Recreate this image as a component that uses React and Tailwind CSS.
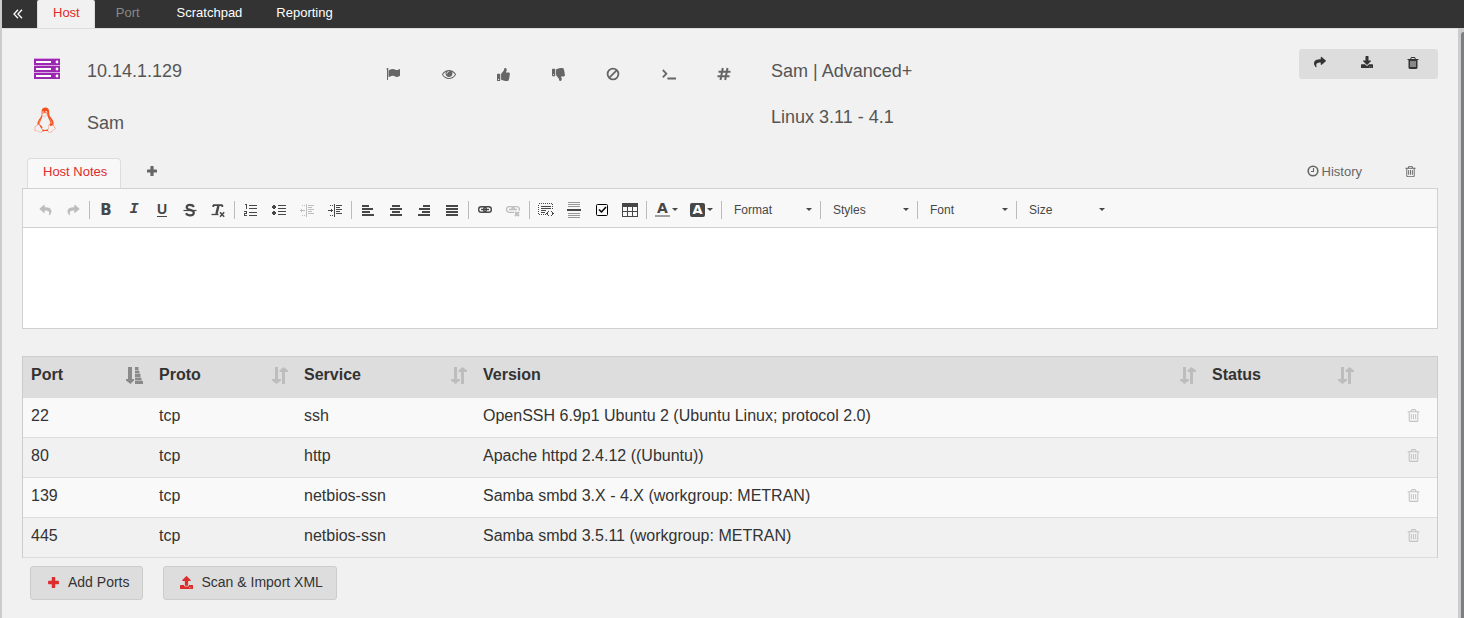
import React from "react";
import { FaThumbsUp, FaThumbsDown, FaShare, FaDownload, FaUpload, FaLinux, FaReply } from "react-icons/fa";

const CAN =
  "m928 32v64q0 14-9 23t-23 9h-96v948q0 83-47 143.5t-113 60.5h-832q-66 0-113-58.5t-47-141.5v-952h-96q-14 0-23-9t-9-23v-64q0-14 9-23t23-9h309l70-167q15-37 54-63t79-26h320q40 0 79 26t54 63l70 167h309q14 0 23 9t9 23z";
const GLYPHS = {
  trashOutline:
    "M704 736v576q0 14-9 23t-23 9h-64q-14 0-23-9t-9-23v-576q0-14 9-23t23-9h64q14 0 23 9t9 23zm256 0v576q0 14-9 23t-23 9h-64q-14 0-23-9t-9-23v-576q0-14 9-23t23-9h64q14 0 23 9t9 23zm256 0v576q0 14-9 23t-23 9h-64q-14 0-23-9t-9-23v-576q0-14 9-23t23-9h64q14 0 23 9t9 23zm128 724v-948h-896v948q0 22 7 40.5t14.5 27 10.5 8.5h832q3 0 10.5-8.5t14.5-27 7-40.5zm-672-1076h448l-48-117q-7-9-17-11h-317q-10 2-17 11z" + CAN,
  trash:
    "M704 1376v-704q0-14-9-23t-23-9h-64q-14 0-23 9t-9 23v704q0 14 9 23t23 9h64q14 0 23-9t9-23zm256 0v-704q0-14-9-23t-23-9h-64q-14 0-23 9t-9 23v704q0 14 9 23t23 9h64q14 0 23-9t9-23zm256 0v-704q0-14-9-23t-23-9h-64q-14 0-23 9t-9 23v704q0 14 9 23t23 9h64q14 0 23-9t9-23zm-544-992h448l-48-117q-7-9-17-11h-317q-10 2-17 11z" + CAN,
  flag:
    "M320 256q0 72-64 110v1266q0 13-9.5 22.5t-22.5 9.5h-64q-13 0-22.5-9.5t-9.5-22.5v-1266q-64-38-64-110 0-53 37.5-90.5t90.5-37.5 90.5 37.5 37.5 90.5zm1472 64v763q0 25-12.5 38.5t-39.5 27.5q-215 116-369 116-61 0-123.5-22t-108.5-48-115.5-48-142.5-22q-192 0-464 146-17 9-33 9-26 0-45-19t-19-45v-742q0-32 31-55 21-14 79-43 236-120 421-120 107 0 200 29t219 88q38 19 88 19 54 0 117.5-21t110-47 88-47 54.5-21q26 0 45 19t19 45z",
  eye:
    "M1664 960q-152-236-381-353 61 104 61 225 0 185-131.5 316.5t-316.5 131.5-316.5-131.5-131.5-316.5q0-121 61-225-229 117-381 353 133 205 333.5 326.5t434.5 121.5 434.5-121.5 333.5-326.5zm-720-384q0-20-14-34t-34-14q-125 0-214.5 89.5t-89.5 214.5q0 20 14 34t34 14 34-14 14-34q0-86 61-147t147-61q20 0 34-14t14-34zm848 384q0 34-20 69-140 230-376.5 368.5t-499.5 138.5-499.5-139-376.5-368q-20-35-20-69t20-69q140-229 376.5-368t499.5-139 499.5 139 376.5 368q20 35 20 69z",
};

function Glyph({ name, className = "size-[14px]" }) {
  return (
    <svg viewBox="0 0 1792 1792" fill="currentColor" className={className} aria-hidden="true">
      <path d={GLYPHS[name]} />
    </svg>
  );
}

function Ban() {
  return (
    <svg viewBox="0 0 14 14" className="size-[14px]" fill="none" stroke="currentColor" strokeWidth="1.8" aria-hidden="true">
      <circle cx="7" cy="7" r="5.4" />
      <path d="M3.4 10.6 10.6 3.4" />
    </svg>
  );
}

function Terminal() {
  return (
    <svg viewBox="0 0 14 14" className="size-[14px]" fill="none" stroke="currentColor" strokeWidth="1.8" aria-hidden="true">
      <path d="M.8 3 4.400 6.700.8 10.400M5.400 11.500H14" />
    </svg>
  );
}

function Hash() {
  return (
    <svg viewBox="0 0 14 14" className="size-[14px]" fill="none" stroke="currentColor" strokeWidth="2" aria-hidden="true">
      <path d="M5.800 1 3.500 13M10.500 1 8.200 13M1.500 4.700H13.500M.5 9.300H12.500" />
    </svg>
  );
}

function Plus({ className = "size-[12px]" }) {
  return (
    <svg viewBox="0 0 12 12" className={className} fill="currentColor" aria-hidden="true">
      <path d="M5 1h2q.6 0 .6.6v2.800h2.800q.6 0 .6.6v2q0 .6-.6.6H7.600v2.800q0 .6-.6.6H5q-.6 0-.6-.6V7.600H1.600Q1 7.600 1 7V5q0-.6.6-.6h2.800V1.600Q4.400 1 5 1z" />
    </svg>
  );
}

function Clock() {
  return (
    <svg viewBox="0 0 12 12" className="size-[12px]" fill="none" stroke="currentColor" aria-hidden="true">
      <circle cx="6" cy="6" r="4.800" strokeWidth="1.600" />
      <path d="M6.500 3v3.500H4" strokeWidth="1.100" />
    </svg>
  );
}

function ServerStack() {
  return (
    <svg viewBox="0 0 26 22" className="h-[22px] w-[26px]" aria-hidden="true">
      {[1, 8, 15].map((y) => (
        <g key={y}>
          <rect x="0" y={y} width="26" height="6" fill="#9c27b0" />
          <rect x="0" y={y - 1} width="26" height="1" fill="#d9a6e2" />
          <rect x="2" y={y + 2} width="15" height="2" fill="#fff" />
          <circle cx="23" cy={y + 3} r="1.4" fill="#fff" />
        </g>
      ))}
    </svg>
  );
}

function SortBoth() {
  return (
    <svg viewBox="0 0 16 17" className="h-[17px] w-[16px] text-[#bdbdbd]" fill="currentColor" aria-hidden="true">
      <path d="M3 0h3v12h3v1.500L4.500 17 0 13.500V12h3zM10 17h3V5h3V3.500L11.500 0 7.500 3.500V5H10z" />
    </svg>
  );
}

function SortAsc() {
  return (
    <svg viewBox="0 0 17 17" className="h-[17px] w-[17px] text-[#8a8a8a]" fill="currentColor" aria-hidden="true">
      <path d="M2 0h4v12h2v1.500L4.500 17 0 13.500V12h2z" />
      <path d="M9 0h4v4h1v3h1v4h1v3h1v3H9z" opacity=".45" />
      <path d="M9 0h3v3H9zM9 4h4v2H9zM9 7h5v3H9zM9 11h6v2H9zM9 14h8v3H9z" />
    </svg>
  );
}

function Tool({ label, muted, wide, children }) {
  return (
    <button
      type="button"
      aria-label={label}
      disabled={muted}
      className={`flex h-7 items-center justify-center ${wide ? "w-[35px]" : "w-7"} ${muted ? "text-[#bdbdbd]" : "text-[#474747]"}`}
    >
      {children}
    </button>
  );
}

const Sep = () => <span className="mx-0.5 h-[18px] w-px shrink-0 bg-[#bcbcbc]" />;

function Draw({ children }) {
  return (
    <svg viewBox="0 0 16 16" className="size-4" fill="currentColor" shapeRendering="crispEdges" aria-hidden="true">
      {children}
    </svg>
  );
}

function Caret() {
  return (
    <svg viewBox="0 0 6 3" className="h-[3px] w-[6px] shrink-0" fill="#474747" aria-hidden="true">
      <path d="M0 0h6L3 3z" />
    </svg>
  );
}

function Picker({ label, className }) {
  return (
    <span className={`grid h-7 items-center ${className}`}>
      <select aria-label={label} className="col-start-1 row-start-1 w-full appearance-none bg-transparent pl-[10px] text-[12px] leading-5 text-[#474747] outline-none">
        <option>{label}</option>
      </select>
      <span className="pointer-events-none col-start-1 row-start-1 justify-self-end pr-[6px]">
        <Caret />
      </span>
    </span>
  );
}

function Toolbar() {
  return (
    <div className="flex h-[39px] items-center overflow-hidden border-b border-[#d1d1d1] bg-[#f8f8f8] pl-2 pt-[3px]">
      <Tool label="Undo" muted><FaReply className="h-[12px] w-[15px]" /></Tool>
      <Tool label="Redo" muted><FaShare className="h-[12px] w-[15px]" /></Tool>
      <Sep />
      <Tool label="Bold"><span className="text-[15px] font-bold leading-4 font-['DejaVu_Sans',sans-serif]">B</span></Tool>
      <Tool label="Italic"><span className="text-[15px] font-bold italic leading-4 font-['Liberation_Mono',monospace]">I</span></Tool>
      <Tool label="Underline"><span className="border-b border-[#474747] text-[14px] font-bold leading-[13px]">U</span></Tool>
      <Tool label="Strikethrough">
        <svg viewBox="0 0 16 16" className="size-4" fill="none" stroke="currentColor" aria-hidden="true">
          <path d="M12 4.800C11 3.300 9.700 2.800 8 2.800c-2 0-3.300.9-3.300 2.400C4.700 8.800 11.800 7 11.800 10.800c0 1.700-1.600 2.600-3.700 2.600-1.900 0-3.300-.7-4.100-2.200" strokeWidth="2.200" />
          <path d="M1.500 8.500h13" strokeWidth="1.200" />
        </svg>
      </Tool>
      <Tool label="Remove format">
        <svg viewBox="0 0 16 16" className="size-4" fill="none" stroke="currentColor" aria-hidden="true">
          <path d="M3 3.200h9.500M3.300 3v2M12.300 3v2" strokeWidth="1.800" />
          <path d="M8.600 3 6.400 12" strokeWidth="2.400" />
          <path d="M1.500 12.500h7" strokeWidth="1.300" />
          <path d="m10 10.200 4.200 4.600M14.200 10.200 10 14.800" strokeWidth="1.500" />
        </svg>
      </Tool>
      <Sep />
      <Tool label="Numbered list">
        <Draw><path d="M2 2h2v5H3V3H2zM1 9h3v3H2v1h2v1H1v-3h2v-1H1zM6 3h8v1H6zM6 6h8v1H6zM6 10h8v1H6zM6 13h8v1H6z" /></Draw>
      </Tool>
      <Tool label="Bulleted list">
        <Draw><path d="M2 3h2v1h1v2H4v1H2V6H1V4h1zM2 9h2v1h1v2H4v1H2v-1H1v-2h1zM7 3h8v1H7zM7 6h8v1H7zM7 9h8v1H7zM7 12h8v1H7z" /></Draw>
      </Tool>
      <Tool label="Decrease indent" muted>
        <Draw><path d="M1 8h5v1H1zM2 7h1v3H2zM7 2h1v13H7zM9 3h6v1H9zM9 5h4v1H9zM9 7h6v1H9zM9 9h4v1H9zM9 11h6v1H9zM3 3h1v1H3zM5 3h1v1H5zM3 13h1v1H3zM5 13h1v1H5z" /></Draw>
      </Tool>
      <Tool label="Increase indent">
        <Draw><path d="M1 8h5v1H1zM4 7h1v3H4zM7 2h1v13H7zM9 3h6v1H9zM9 5h4v1H9zM9 7h6v1H9zM9 9h4v1H9zM9 11h6v1H9zM3 3h1v1H3zM5 3h1v1H5zM3 13h1v1H3zM5 13h1v1H5z" /></Draw>
      </Tool>
      <Sep />
      <Tool label="Align left"><Draw><path d="M2 3h7v2H2zM2 6h11v2H2zM2 9h8v2H2zM2 12h12v2H2z" /></Draw></Tool>
      <Tool label="Center"><Draw><path d="M4 3h8v2H4zM2 6h12v2H2zM4 9h8v2H4zM2 12h12v2H2z" /></Draw></Tool>
      <Tool label="Align right"><Draw><path d="M7 3h7v2H7zM3 6h11v2H3zM6 9h8v2H6zM2 12h12v2H2z" /></Draw></Tool>
      <Tool label="Justify"><Draw><path d="M2 3h12v2H2zM2 6h12v2H2zM2 9h12v2H2zM2 12h12v2H2z" /></Draw></Tool>
      <Sep />
      <Tool label="Link">
        <svg viewBox="0 0 16 16" className="size-4" fill="none" stroke="currentColor" strokeWidth="1.400" aria-hidden="true">
          <rect x="1.700" y="4.700" width="7.600" height="5.600" rx="2.600" /><rect x="6.700" y="4.700" width="7.600" height="5.600" rx="2.600" /><path d="M4 7.500h8" />
        </svg>
      </Tool>
      <Tool label="Unlink" muted>
        <svg viewBox="0 0 16 16" className="size-4" fill="none" stroke="currentColor" strokeWidth="1.300" aria-hidden="true">
          <path d="M9 10.300H4.300a2.600 2.600 0 0 1 0-5.600h2.400a2.600 2.600 0 0 1 2.600 2.600M4 7.500h8M7 7.300a2.600 2.600 0 0 1 2.600-2.600h2.400a2.600 2.600 0 0 1 2 4" /><path d="m10 10 4 4m0-4-4 4" strokeWidth="1.800" />
        </svg>
      </Tool>
      <Sep />
      <Tool label="Insert code snippet">
        <Draw>
          <path d="M3 4h10v1H3zM3 6h10v1H3zM3 8h7v1H3zM3 10h4v1H3z" />
          <rect x="0.500" y="1.500" width="14" height="11" fill="none" stroke="currentColor" strokeDasharray="1 1" />
          <path d="M8 8h8v7H8z" fill="#f8f8f8" />
          <path d="M10 9h1v1h-1v1H9v1h1v1h1v1h-1v-1H9v-1H8v-1h1v-1h1zM13 9h1v1h1v1h1v1h-1v1h-1v1h-1v-1h1v-1h1v-1h-1v-1h-1z" />
          <path d="M9 10h1v3H9zM14 10h1v3h-1z" />
        </Draw>
      </Tool>
      <Tool label="Page break">
        <Draw><path d="M2 0h12v1H2zM2 2h12v1H2zM2 4h12v1H2zM2 11h12v1H2zM2 13h12v1H2zM2 15h12v1H2z" opacity=".55" /><path d="M1 7h14v2H1z" /></Draw>
      </Tool>
      <Tool label="Checkbox">
        <svg viewBox="0 0 16 16" className="size-4 text-black" fill="none" stroke="currentColor" aria-hidden="true">
          <rect x="2.500" y="2.500" width="11" height="11" rx="1" strokeWidth="1" /><path d="m5 7.500 2.500 2.500L12 5" strokeWidth="1.500" />
        </svg>
      </Tool>
      <Tool label="Table">
        <Draw><path d="M0 1h16v4H0zM0 5h1v10H0zM15 5h1v10h-1zM0 14h16v1H0zM5 5h1v10H5zM10 5h1v10h-1zM1 9h14v1H1z" /></Draw>
      </Tool>
      <Sep />
      <Tool label="Text color" wide>
        <span className="mr-0.5 border-b-2 border-[#a0a0a0] px-[2px] text-[14px] font-bold leading-[13px] font-['DejaVu_Sans',sans-serif]">A</span><Caret />
      </Tool>
      <Tool label="Background color" wide>
        <span className="mr-0.5 rounded-xs bg-[#474747] px-[2px] text-[13px] font-bold leading-[14px] text-white font-['DejaVu_Sans',sans-serif]">A</span><Caret />
      </Tool>
      <Sep />
      <Picker label="Format" className="w-[94px]" />
      <Sep />
      <Picker label="Styles" className="w-[92px]" />
      <Sep />
      <Picker label="Font" className="w-[94px]" />
      <Sep />
      <Picker label="Size" className="w-[92px]" />
    </div>
  );
}

const COLUMNS = [
  { name: "Port", width: "w-[128px]", sort: <SortAsc /> },
  { name: "Proto", width: "w-[145px]", sort: <SortBoth /> },
  { name: "Service", width: "w-[179px]", sort: <SortBoth /> },
  { name: "Version", width: "", sort: <SortBoth /> },
  { name: "Status", width: "w-[158px]", sort: <SortBoth /> },
];

const PORTS = [
  ["22", "tcp", "ssh", "OpenSSH 6.9p1 Ubuntu 2 (Ubuntu Linux; protocol 2.0)"],
  ["80", "tcp", "http", "Apache httpd 2.4.12 ((Ubuntu))"],
  ["139", "tcp", "netbios-ssn", "Samba smbd 3.X - 4.X (workgroup: METRAN)"],
  ["445", "tcp", "netbios-ssn", "Samba smbd 3.5.11 (workgroup: METRAN)"],
];

const ACTIONS = [
  ["Flag", <Glyph name="flag" />],
  ["Watch", <Glyph name="eye" />],
  ["Thumbs up", <FaThumbsUp className="size-[13px]" />],
  ["Thumbs down", <FaThumbsDown className="size-[13px]" />],
  ["Block", <Ban />],
  ["Terminal", <Terminal />],
  ["Tag", <Hash />],
];

export default function App() {
  return (
    <div className="flex min-h-screen border-l-2 border-[#ccc] bg-[#f1f1f1] font-['Liberation_Sans',Arial,sans-serif] text-[#333]">
      <div className="flex min-w-0 grow flex-col">
        <nav className="flex h-7 bg-[#333] text-[13px] leading-[26px] text-white">
          <button type="button" aria-label="Collapse" className="flex w-[35px] items-center pl-[11px]">
            <svg viewBox="0 0 10 10" className="size-[10px]" fill="none" stroke="currentColor" strokeWidth="1.300" aria-hidden="true">
              <path d="M5 .8 1 5l4 4.200M9 .8 5 5l4 4.200" />
            </svg>
          </button>
          <a href="#host" className="h-[29px] rounded-t-xs border-x border-[#ddd] bg-[#f1f1f1] pl-[15px] pr-[14px] text-[#dd2c2c]">Host</a>
          <a href="#port" className="px-[21px] text-[#888]">Port</a>
          <a href="#scratchpad" className="px-4">Scratchpad</a>
          <a href="#reporting" className="px-[18px]">Reporting</a>
        </nav>

        <div className="flex grow">
          <main className="min-w-0 grow border-t border-[#ddd] px-5 pt-5">
            <header className="flex items-start">
              <div className="grid w-[364px] shrink-0 grid-cols-[53px_1fr] items-start pl-3 text-[18px] leading-[22px] text-[#555]">
                <span className="pt-[9px]"><ServerStack /></span>
                <h1 className="h-[52px] pt-[11px]">10.14.1.129</h1>
                <FaLinux className="mt-[6px] h-[26px] w-[22px] text-[#f4511e]" />
                <p className="h-[52px] pt-[11px]">Sam</p>
              </div>
              <div className="flex grow pt-[18px] text-[#666]">
                <div className="flex w-[385px] shrink-0 justify-between pr-[40px]">
                  {ACTIONS.map(([label, icon]) => (
                    <button key={label} type="button" aria-label={label}>{icon}</button>
                  ))}
                </div>
              </div>
              <div className="w-[528px] pt-[11px] text-[18px] leading-[22px] text-[#555]">
                <p>Sam | Advanced+</p>
                <p className="pt-6">Linux 3.11 - 4.1</p>
              </div>
              <div className="flex h-[30px] w-[139px] shrink-0 items-start justify-between rounded-[3px] bg-[#ddd] pl-[14px] pr-[18px] pt-[7px]">
                <button type="button" aria-label="Share"><FaShare className="h-[12px] w-[14px]" /></button>
                <button type="button" aria-label="Download"><FaDownload className="size-[12px]" /></button>
                <button type="button" aria-label="Delete host"><Glyph name="trash" className="size-[14px]" /></button>
              </div>
            </header>

            <section>
              <div className="flex h-[35px] items-end pl-[5px] text-[13px] text-[#666]">
                <button type="button" className="h-[30px] rounded-t border border-b-0 border-[#ddd] bg-[#f8f8f8] pl-[15px] pr-[13px] pb-1 text-[#dd2c2c]">Host Notes</button>
                <button type="button" aria-label="Add note" className="px-[25px] pb-[11px]"><Plus /></button>
                <button type="button" className="ml-auto flex items-center gap-[3px] pb-[7px]"><Clock />History</button>
                <button type="button" aria-label="Delete note" className="pb-[10px] pl-[42px] pr-[21px]"><Glyph name="trashOutline" className="size-[13px]" /></button>
              </div>
              <div className="border border-[#d1d1d1] bg-white">
                <Toolbar />
                <textarea aria-label="Host notes" className="block h-[100px] w-full resize-none bg-white p-4 text-[13px] outline-none" />
              </div>
            </section>

            <table className="mt-[27px] w-full table-fixed border-separate border-spacing-0 border-x border-t border-[#ccc] text-left text-[16px] leading-[20px]">
              <thead>
                <tr className="bg-[#ddd]">
                  {COLUMNS.map((c) => (
                    <th key={c.name} scope="col" className={`h-[41px] px-2 pt-2 align-top font-bold ${c.width}`}>
                      <span className="flex justify-between">
                        {c.name}
                        <button type="button" aria-label={`Sort by ${c.name}`} className="pt-px">{c.sort}</button>
                      </span>
                    </th>
                  ))}
                  <td className="w-[75px]" />
                </tr>
              </thead>
              <tbody>
                {PORTS.map((row) => (
                  <tr key={row[0]} className="odd:bg-[#f9f9f9]">
                    {row.map((cell, i) => (
                      <td key={i} className="h-10 border-b border-[#ddd] px-2 pt-2 align-top">{cell}</td>
                    ))}
                    <td className="border-b border-[#ddd]" />
                    <td className="border-b border-[#ddd] pr-4 pt-2.5 align-top text-[#c4c4c4]">
                      <button type="button" aria-label={`Delete port ${row[0]}`} className="ml-auto block"><Glyph name="trashOutline" className="size-[15px]" /></button>
                    </td>
                  </tr>
                ))}
              </tbody>
            </table>

            <div className="flex gap-5 px-2 pt-2 text-[14px] leading-5">
              <button type="button" className="flex h-[34px] items-center gap-2 rounded-[3px] border border-[#ccc] bg-[#ddd] pl-4 pr-[13px] pb-0.5">
                <Plus className="size-[13px] text-[#dd2c2c]" />Add Ports
              </button>
              <button type="button" className="flex h-[34px] items-center gap-2 rounded-[3px] border border-[#ccc] bg-[#ddd] pl-4 pr-[13px] pb-0.5">
                <FaUpload className="size-[13px] text-[#dd2c2c]" />Scan &amp; Import XML
              </button>
            </div>
          </main>
          <div className="flex w-[6px] shrink-0 bg-[#ccc] pl-[3px] pt-1">
            <div className="grow rounded-tl-sm bg-[#7c7f7f]" />
          </div>
        </div>
      </div>
    </div>
  );
}
